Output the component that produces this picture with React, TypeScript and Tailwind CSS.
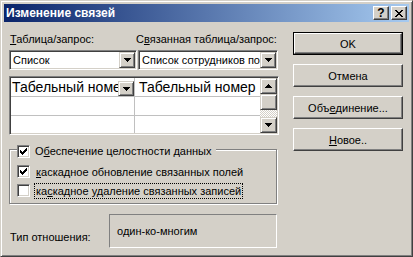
import React from "react";

const raised =
    "bg-[#d4d0c8] border border-t-[#d4d0c8] border-l-[#d4d0c8] border-r-[#404040] border-b-[#404040] shadow-[inset_1px_1px_0_#fff,inset_-1px_-1px_0_#808080]";
const pushBtn =
    "bg-[#d4d0c8] border border-t-white border-l-white border-r-[#404040] border-b-[#404040] shadow-[inset_-1px_-1px_0_#808080]";
const sunken =
    "border border-t-[#808080] border-l-[#808080] border-r-white border-b-white shadow-[inset_1px_1px_0_#404040,inset_-1px_-1px_0_#d4d0c8] p-[1px]";

const Tri = ({up = false}: {up?: boolean}) => (
    <svg width="7" height="4" viewBox="0 0 7 4" shapeRendering="crispEdges" className={up ? "rotate-180" : ""}>
        <path d="M0 0h7v1h-1v1h-1v1h-1v1h-1v-1h-1v-1h-1v-1h-1z" fill="#000"/>
    </svg>
);

const ArrowBtn = ({up = false, className = ""}: {up?: boolean; className?: string}) => (
    <div className={`${raised} flex items-center justify-center ${className}`}>
        <Tri up={up}/>
    </div>
);

const Check = ({checked}: {checked: boolean}) => (
    <div className={`${sunken} w-[13px] h-[13px] bg-white shrink-0`}>
        {checked &&
            <svg width="9" height="9" viewBox="0 0 9 9" shapeRendering="crispEdges">
                <path
                    d="M1 3h1v3h-1zM2 4h1v3h-1zM3 5h1v3h-1zM4 4h1v3h-1zM5 3h1v3h-1zM6 2h1v3h-1zM7 1h1v3h-1z"
                    fill="#000"/>
            </svg>
        }
    </div>
);

const Combo = ({text, w}: {text: string; w: string}) => (
    <div className={`${sunken} ${w} h-[20px] bg-white flex items-center`}>
        <span className="flex-1 pl-[2px] whitespace-nowrap overflow-hidden">{text}</span>
        <ArrowBtn className="w-[16px] h-[16px] shrink-0"/>
    </div>
);

const Button = ({children, isDefault = false}: {children: React.ReactNode; isDefault?: boolean}) =>
    isDefault ?
        <div className="h-[23px] border border-black flex">
            <div className={`${pushBtn} flex-1 flex items-center justify-center`}>{children}</div>
        </div>
        :
        <div className={`${pushBtn} h-[23px] flex items-center justify-center`}>{children}</div>;

export default function App() {
    return <div
        className="w-[413px] h-[257px] bg-[#d4d0c8] border border-t-[#d4d0c8] border-l-[#d4d0c8] border-r-[#404040] border-b-[#404040] shadow-[inset_1px_1px_0_#fff,inset_-1px_-1px_0_#808080] p-[3px] flex flex-col font-['Liberation_Sans',Arial,sans-serif] text-[11px] leading-[14px] text-black">

        {/* title bar */}
        <div className="h-[18px] bg-linear-to-r/srgb from-[#0a246a] to-[#a6caf0] flex items-center pl-[2px] pr-[2px]">
            <span className="flex-1 text-white font-bold text-[12px]">Изменение связей</span>
            <div className="flex gap-[2px]">
                <div className={`${pushBtn} w-[16px] h-[14px] flex items-center justify-center font-bold text-[12px] leading-none`}>?</div>
                <div className={`${pushBtn} w-[16px] h-[14px] flex items-center justify-center`}>
                    <svg width="8" height="7" viewBox="0 0 8 7" shapeRendering="crispEdges">
                        <path
                            d="M0 0h2v1h-2zM6 0h2v1h-2zM1 1h2v1h-2zM5 1h2v1h-2zM2 2h4v1h-4zM3 3h2v1h-2zM2 4h4v1h-4zM1 5h2v1h-2zM5 5h2v1h-2zM0 6h2v1h-2zM6 6h2v1h-2z"
                            fill="#000"/>
                    </svg>
                </div>
            </div>
        </div>

        <div className="flex flex-1 pt-[10px] pl-[5px]">
            {/* left column */}
            <div className="w-[269px] flex flex-col">
                <div className="flex h-[14px] mb-[4px]">
                    <span className="w-[127px] pl-[1px]"><u>Т</u>аблица/запрос:</span>
                    <span>С<u>в</u>язанная таблица/запрос:</span>
                </div>
                <div className="flex gap-[1px]">
                    <Combo text="Список" w="w-[128px]"/>
                    <Combo text="Список сотрудников по" w="w-[140px]"/>
                </div>

                <div className={`${sunken} mt-[6px] w-[270px] h-[59px] bg-white flex`}>
                    <div className="flex-1 flex flex-col text-[14px]">
                        <div className="flex h-[19px] border-b border-[#c0c0c0]">
                            <div className="w-[124px] border-r border-[#c0c0c0] relative overflow-hidden whitespace-nowrap pl-[1px] leading-[18px]">
                                Табельный номер
                                <ArrowBtn className="absolute right-0 bottom-0 w-[16px] h-[15px]"/>
                            </div>
                            <div className="flex-1 pl-[4px] leading-[18px] whitespace-nowrap overflow-hidden">Табельный номер</div>
                        </div>
                        <div className="flex h-[19px] border-b border-[#c0c0c0]">
                            <div className="w-[124px] border-r border-[#c0c0c0]"/>
                            <div className="flex-1"/>
                        </div>
                        <div className="flex flex-1">
                            <div className="w-[124px] border-r border-[#c0c0c0]"/>
                            <div className="flex-1"/>
                        </div>
                    </div>
                    <div className="w-[17px] flex flex-col">
                        <ArrowBtn up className="h-[16px]"/>
                        <div className={`${raised} h-[16px]`}/>
                        <div className="flex-1 bg-[repeating-conic-gradient(#fff_0_25%,#d4d0c8_0_50%)] bg-size-[2px_2px]"/>
                        <ArrowBtn className="h-[16px]"/>
                    </div>
                </div>

                {/* group box */}
                <div className="mt-[14px] w-[268px] h-[55px] border border-[#808080] shadow-[inset_1px_1px_0_#fff,1px_1px_0_#fff] flex flex-col pl-[7px]">
                    <div className="-mt-[7px] h-[16px] flex items-center self-start bg-[#d4d0c8] pr-[5px]">
                        <Check checked={true}/>
                        <span className="ml-[5px]">О<u>б</u>еспечение целостности данных</span>
                    </div>
                    <div className="h-[19px] mt-[3px] flex items-center">
                        <Check checked={true}/>
                        <span className="ml-[4px] px-[1px] border border-transparent"><u>к</u>аскадное обновление связанных полей</span>
                    </div>
                    <div className="h-[19px] flex items-center">
                        <Check checked={false}/>
                        <span className="ml-[4px] px-[1px] border border-dotted border-black">ка<u>с</u>кадное удаление связанных записей</span>
                    </div>
                </div>

                <div className="mt-[10px] flex">
                    <span className="w-[100px] pl-[1px] mt-[16px]">Тип отношения:</span>
                    <div className="w-[168px] h-[34px] border border-t-[#808080] border-l-[#808080] border-r-white border-b-white pl-[7px] pt-[9px]">
                        один-ко-многим
                    </div>
                </div>
            </div>

            {/* right column */}
            <div className="ml-[15px] w-[110px] flex flex-col gap-[9px]">
                <Button isDefault>OK</Button>
                <Button>Отмена</Button>
                <Button>Объ<u>е</u>динение...</Button>
                <Button><u>Н</u>овое..</Button>
            </div>
        </div>
    </div>;
}
